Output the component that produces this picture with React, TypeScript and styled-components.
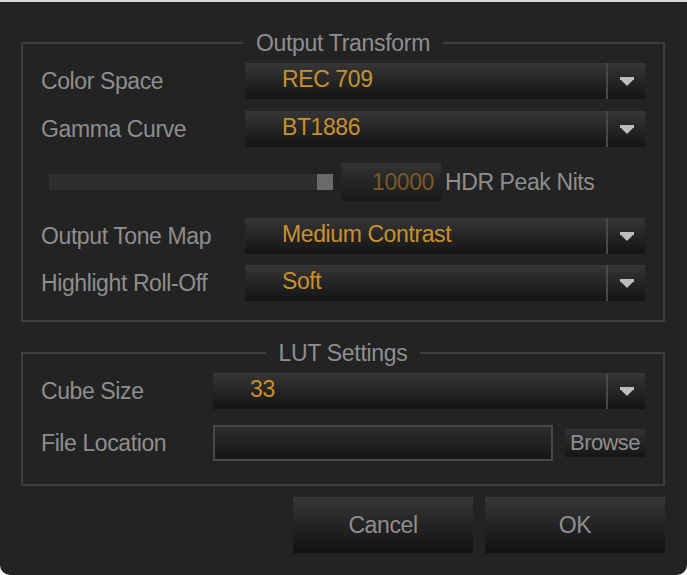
import styled, { createGlobalStyle } from "styled-components";

const Global = createGlobalStyle`
  body { margin: 0; background: #fff; font-family: "Liberation Sans", Arial, sans-serif; }
`;

const Window = styled.div`
  width: 687px;
  height: 575px;
  box-sizing: border-box;
  background: #232323;
  border-top: 2px solid #d8d8d8;
  border-radius: 0 0 10px 10px;
  padding: 26px 22px 0 21px;
  display: flex;
  flex-direction: column;
`;

const Group = styled.fieldset<{ $h: number }>`
  margin: 0;
  height: ${(p) => p.$h}px;
  box-sizing: border-box;
  border: 2px solid #3f3f3f;
  padding: 5px 18px 0 18px;
  display: flex;
  flex-direction: column;
`;

const Legend = styled.legend`
  margin: 0 auto;
  padding: 0 13px;
  color: #8e8e8e;
  font-size: 23px;
  line-height: 30px;
  letter-spacing: -0.3px;
`;

const Row = styled.div<{ $gap: number }>`
  display: flex;
  align-items: center;
  height: 36px;
  margin-bottom: ${(p) => p.$gap}px;
`;

const Label = styled.div<{ $w: number }>`
  width: ${(p) => p.$w}px;
  color: #8e8e8e;
  font-size: 23px;
  letter-spacing: -0.4px;
  flex: none;
`;

const Combo = styled.div`
  flex: 1;
  height: 36px;
  display: flex;
  background: linear-gradient(#363636, #141414);
`;

const ComboText = styled.div`
  flex: 1;
  padding-left: 37px;
  color: #c9902b;
  font-size: 23px;
  letter-spacing: -0.4px;
  line-height: 33px;
`;

const Arrow = styled.div`
  width: 37px;
  border-left: 2px solid #484848;
  display: flex;
  align-items: center;
  justify-content: center;
`;

const SliderRow = styled.div`
  display: flex;
  align-items: center;
  height: 38px;
  margin: 16px 0 17px 8px;
`;

const Track = styled.div`
  width: 284px;
  height: 16px;
  background: #2e2e2e;
  display: flex;
  justify-content: flex-end;
`;

const Thumb = styled.div`
  width: 16px;
  background: #6a6a6a;
`;

const NumBox = styled.div`
  width: 100px;
  height: 38px;
  margin-left: 8px;
  background: linear-gradient(#333, #181818);
  color: #7a5a22;
  font-size: 23px;
  letter-spacing: -0.4px;
  text-align: right;
  line-height: 38px;
  box-sizing: border-box;
  padding-right: 7px;
`;

const NumLabel = styled.div`
  margin-left: 4px;
  color: #8e8e8e;
  font-size: 23px;
  letter-spacing: -0.4px;
`;

const Input = styled.div`
  width: 340px;
  height: 36px;
  box-sizing: border-box;
  border: 2px solid #484848;
  background: linear-gradient(#2c2c2c, #161616);
`;

const SmallBtn = styled.div`
  margin-left: 12px;
  width: 80px;
  height: 28px;
  background: linear-gradient(#333, #151515);
  color: #8e8e8e;
  font-size: 22px;
  letter-spacing: -0.6px;
  line-height: 28px;
  text-align: center;
  white-space: nowrap;
`;

const Buttons = styled.div`
  display: flex;
  justify-content: flex-end;
  gap: 12px;
  margin-top: 11px;
`;

const Button = styled.div`
  width: 180px;
  height: 56px;
  background: linear-gradient(#363636, #121212);
  color: #8e8e8e;
  font-size: 23px;
  letter-spacing: -0.4px;
  line-height: 56px;
  text-align: center;
`;

const Spacer = styled.div`
  height: 16px;
`;

function Tri() {
  return (
    <svg width="14" height="9" viewBox="0 0 14 9">
      <rect x="0" y="0" width="14" height="3" fill="#bdbdbd" />
      <polygon points="1,3 13,3 7,9" fill="#bdbdbd" />
    </svg>
  );
}

function Select({ value }: { value: string }) {
  return (
    <Combo>
      <ComboText>{value}</ComboText>
      <Arrow>
        <Tri />
      </Arrow>
    </Combo>
  );
}

export default function App() {
  return (
    <>
      <Global />
      <Window>
        <Group $h={294}>
          <Legend>Output Transform</Legend>
          <Row $gap={12}>
            <Label $w={204}>Color Space</Label>
            <Select value="REC 709" />
          </Row>
          <Row $gap={0}>
            <Label $w={204}>Gamma Curve</Label>
            <Select value="BT1886" />
          </Row>
          <SliderRow>
            <Track>
              <Thumb />
            </Track>
            <NumBox>10000</NumBox>
            <NumLabel>HDR Peak Nits</NumLabel>
          </SliderRow>
          <Row $gap={11}>
            <Label $w={204}>Output Tone Map</Label>
            <Select value="Medium Contrast" />
          </Row>
          <Row $gap={0}>
            <Label $w={204}>Highlight Roll-Off</Label>
            <Select value="Soft" />
          </Row>
        </Group>
        <Spacer />
        <Group $h={148}>
          <Legend>LUT Settings</Legend>
          <Row $gap={16}>
            <Label $w={172}>Cube Size</Label>
            <Select value="33" />
          </Row>
          <Row $gap={0}>
            <Label $w={172}>File Location</Label>
            <Input />
            <SmallBtn>Browse</SmallBtn>
          </Row>
        </Group>
        <Buttons>
          <Button>Cancel</Button>
          <Button>OK</Button>
        </Buttons>
      </Window>
    </>
  );
}
